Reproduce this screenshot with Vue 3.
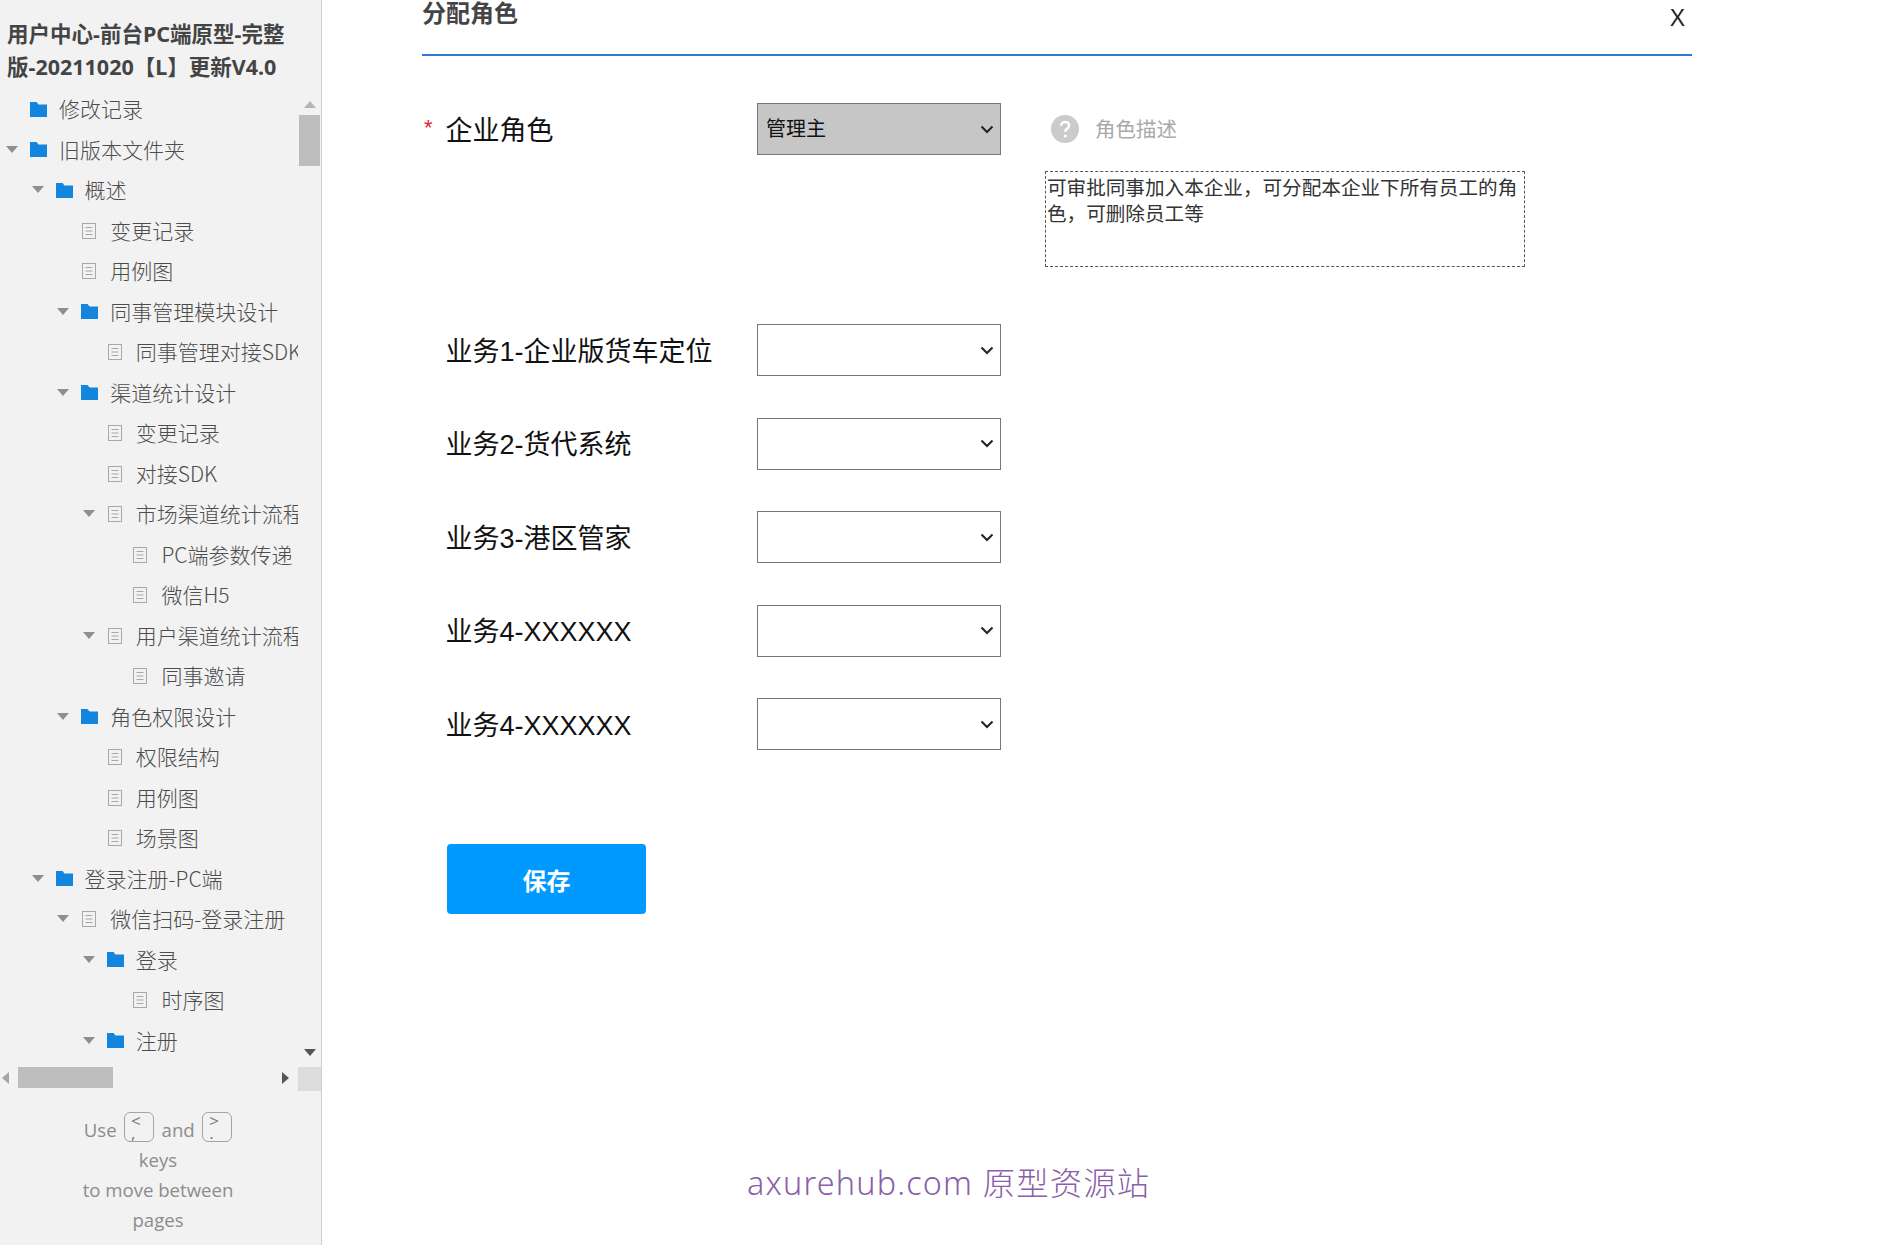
<template>
  <div class="page">
    <!-- left navigation -->
    <aside class="sidebar">
      <div class="project-title">用户中心-前台PC端原型-完整版-20211020【L】更新V4.0</div>

      <div class="tree-wrap">
        <ul class="tree">
          <li
            v-for="(row, i) in rows"
            :key="i"
            class="tree-row"
            :style="{ paddingLeft: 6 + row.level * 25.6 + 'px' }"
          >
            <span class="arrow-slot"><i v-if="row.open" class="arrow"></i></span>
            <svg v-if="row.type === 'folder'" class="icon" width="17" height="15" viewBox="0 0 17 15">
              <path d="M0 0h6.500l2 2.500H17V15H0z" fill="#1485dc" />
            </svg>
            <svg v-else class="icon" width="17" height="16" viewBox="0 0 17 16">
              <rect x="1.5" y=".5" width="13" height="15" fill="none" stroke="#a8a8a8" />
              <path d="M4.5 4.5h7M4.5 8h7M4.5 11.500h7" stroke="#a8a8a8" fill="none" />
            </svg>
            <span class="tree-label">{{ row.label }}</span>
          </li>
        </ul>
        <div class="vscroll">
          <i class="tri tri-up"></i>
          <div class="vthumb"></div>
          <i class="tri tri-down"></i>
        </div>
      </div>

      <div class="hscroll">
        <i class="tri tri-left"></i>
        <div class="hthumb"></div>
        <i class="tri tri-right"></i>
        <div class="corner"></div>
      </div>

      <div class="hint">
        <div class="hint-keys">
          <span>Use</span>
          <span class="key">{{ prevKey }}</span>
          <span>and</span>
          <span class="key">{{ nextKey }}</span>
        </div>
        <div>keys</div>
        <div>to move between</div>
        <div>pages</div>
      </div>
    </aside>

    <!-- role dialog -->
    <main class="main">
      <header class="dialog-head">
        <h1>分配角色</h1>
        <span class="close">X</span>
      </header>

      <form class="form" @submit.prevent>
        <div class="form-row role-row">
          <label class="label"><em>*</em>企业角色</label>
          <select class="select select-role">
            <option>管理主</option>
          </select>
          <div class="desc">
            <div class="desc-head">
              <svg width="28" height="28" viewBox="0 0 28 28">
                <circle cx="14" cy="14" r="14" fill="#cbcbcb" />
                <path d="M10 11c0-2.600 1.800-4 4.100-4 2.300 0 4 1.400 4 3.500 0 3-3.800 3-3.800 6.200" fill="none" stroke="#fff" stroke-width="2.400" />
                <circle cx="14.300" cy="21" r="1.600" fill="#fff" />
              </svg>
              <span>角色描述</span>
            </div>
            <div class="desc-box">可审批同事加入本企业，可分配本企业下所有员工的角色，可删除员工等</div>
          </div>
        </div>

        <div v-for="item in services" :key="item.id" class="form-row">
          <label class="label"><em></em>{{ item.name }}</label>
          <select class="select">
            <option></option>
          </select>
        </div>

        <button type="button" class="save">保存</button>
      </form>
    </main>

    <div class="watermark">axurehub.com 原型资源站</div>
  </div>
</template>

<script setup>
const prevKey = '<\n,'
const nextKey = '>\n.'

const rows = [
  { level: 0, type: 'folder', open: false, label: '修改记录' },
  { level: 0, type: 'folder', open: true, label: '旧版本文件夹' },
  { level: 1, type: 'folder', open: true, label: '概述' },
  { level: 2, type: 'file', open: false, label: '变更记录' },
  { level: 2, type: 'file', open: false, label: '用例图' },
  { level: 2, type: 'folder', open: true, label: '同事管理模块设计' },
  { level: 3, type: 'file', open: false, label: '同事管理对接SDK' },
  { level: 2, type: 'folder', open: true, label: '渠道统计设计' },
  { level: 3, type: 'file', open: false, label: '变更记录' },
  { level: 3, type: 'file', open: false, label: '对接SDK' },
  { level: 3, type: 'file', open: true, label: '市场渠道统计流程' },
  { level: 4, type: 'file', open: false, label: 'PC端参数传递' },
  { level: 4, type: 'file', open: false, label: '微信H5' },
  { level: 3, type: 'file', open: true, label: '用户渠道统计流程' },
  { level: 4, type: 'file', open: false, label: '同事邀请' },
  { level: 2, type: 'folder', open: true, label: '角色权限设计' },
  { level: 3, type: 'file', open: false, label: '权限结构' },
  { level: 3, type: 'file', open: false, label: '用例图' },
  { level: 3, type: 'file', open: false, label: '场景图' },
  { level: 1, type: 'folder', open: true, label: '登录注册-PC端' },
  { level: 2, type: 'file', open: true, label: '微信扫码-登录注册' },
  { level: 3, type: 'folder', open: true, label: '登录' },
  { level: 4, type: 'file', open: false, label: '时序图' },
  { level: 3, type: 'folder', open: true, label: '注册' },
]

const services = [
  { id: 1, name: '业务1-企业版货车定位' },
  { id: 2, name: '业务2-货代系统' },
  { id: 3, name: '业务3-港区管家' },
  { id: 4, name: '业务4-XXXXXX' },
  { id: 5, name: '业务4-XXXXXX' },
]
</script>

<style scoped>
.page {
  position: relative;
  display: flex;
  height: 1245px;
  overflow: hidden;
  background: #fff;
  font-family: "Liberation Sans", "Noto Sans CJK SC", sans-serif;
}

.sidebar {
  flex: none;
  width: 321px;
  background: #f2f2f2;
  border-right: 1px solid #cfcfcf;
}

.project-title {
  padding: 17px 0 0 7px;
  width: 285px;
  height: 88px;
  box-sizing: border-box;
  font-size: 21.500px;
  font-weight: 700;
  line-height: 33px;
  color: #444;
  font-family: "Noto Sans", "Noto Sans CJK SC", sans-serif;
}

.tree-wrap {
  display: flex;
  height: 974px;
}

.tree {
  flex: none;
  width: 298px;
  margin: 0;
  padding: 0;
  overflow: hidden;
  list-style: none;
}

.tree-row {
  display: flex;
  align-items: center;
  height: 40.500px;
  white-space: nowrap;
}

.arrow-slot {
  flex: none;
  width: 24px;
  margin-top: 1px;
}

.arrow {
  display: block;
  width: 0;
  height: 0;
  border-left: 6px solid transparent;
  border-right: 6px solid transparent;
  border-top: 7px solid #8f8f8f;
}

.icon {
  flex: none;
  margin-top: 2px;
}

.tree-label {
  margin-left: 12px;
  font-size: 21px;
  font-weight: 300;
  color: #4d4d4d;
  font-family: "Noto Sans CJK SC", sans-serif;
}

.vscroll {
  position: relative;
  flex: none;
  width: 22px;
  margin-top: 7px;
}

.vthumb {
  position: absolute;
  top: 20px;
  left: 1px;
  width: 21px;
  height: 51px;
  background: #bdbdbd;
}

.tri {
  position: absolute;
  width: 0;
  height: 0;
}

.tri-up {
  top: 6px;
  left: 6px;
  border-left: 6px solid transparent;
  border-right: 6px solid transparent;
  border-bottom: 7px solid #b5b5b5;
}

.tri-down {
  bottom: 6px;
  left: 6px;
  border-left: 6px solid transparent;
  border-right: 6px solid transparent;
  border-top: 7px solid #555;
}

.hscroll {
  position: relative;
  height: 21px;
  margin-top: 5px;
}

.hthumb {
  position: absolute;
  left: 18px;
  width: 95px;
  height: 21px;
  background: #bdbdbd;
}

.tri-left {
  top: 5px;
  left: 2px;
  border-top: 6px solid transparent;
  border-bottom: 6px solid transparent;
  border-right: 7px solid #a5a5a5;
}

.tri-right {
  top: 5px;
  left: 282px;
  border-top: 6px solid transparent;
  border-bottom: 6px solid transparent;
  border-left: 7px solid #555;
}

.corner {
  position: absolute;
  left: 298px;
  width: 23px;
  height: 24px;
  background: #dcdcdc;
}

.hint {
  width: 172px;
  margin: 27px 0 0 72px;
  font-family: "Open Sans", sans-serif;
  font-size: 18.600px;
  line-height: 30px;
  text-align: center;
  color: #8c8c8c;
}

.hint-keys {
  display: flex;
  justify-content: center;
  align-items: center;
  gap: 7.500px;
  height: 30px;
}

.key {
  flex: none;
  box-sizing: border-box;
  width: 30px;
  height: 30px;
  margin-top: -6px;
  padding: 2px 0 0 6px;
  border: 1.500px solid #a5a5a5;
  border-radius: 6px;
  font-size: 17px;
  line-height: 12px;
  text-align: left;
  white-space: pre-line;
  color: #777;
}

.main {
  flex: none;
  width: 1270px;
  margin-left: 100px;
}

.dialog-head {
  display: flex;
  justify-content: space-between;
  height: 54px;
  border-bottom: 2px solid #2d78d8;
}

.dialog-head h1 {
  margin: 0;
  font-size: 24px;
  font-weight: 700;
  line-height: 28px;
  color: #444;
}

.close {
  padding: 5px 7px 0 0;
  font-size: 23px;
  line-height: 26px;
  color: #222;
}

.form {
  display: flex;
  flex-direction: column;
  align-items: flex-start;
  gap: 41.500px;
  padding-top: 47px;
}

.form-row {
  display: flex;
  align-items: flex-start;
}

.role-row {
  margin-bottom: 15.500px;
}

.label {
  display: flex;
  align-items: center;
  width: 335px;
  height: 50px;
  font-size: 27px;
  color: #111;
}

.label em {
  flex: none;
  width: 23.500px;
  padding-left: 2px;
  box-sizing: border-box;
  font-size: 22px;
  font-style: normal;
  color: #d9262c;
}

.select {
  flex: none;
  box-sizing: border-box;
  width: 244px;
  height: 52px;
  padding: 0 8px;
  appearance: none;
  background: #fff url("data:image/svg+xml,%3Csvg xmlns='http://www.w3.org/2000/svg' width='14' height='9' viewBox='0 0 14 9'%3E%3Cpath d='M1.500 1.500L7 7l5.500-5.500' fill='none' stroke='%23222' stroke-width='2'/%3E%3C/svg%3E") no-repeat right 6px center;
  border: 1px solid #777;
  border-radius: 0;
  font-family: "Liberation Sans", "Noto Sans CJK SC", sans-serif;
  font-size: 20px;
  color: #111;
}

.select-role {
  background-color: #c6c6c6;
}

.desc {
  margin-left: 44px;
}

.desc-head {
  display: flex;
  align-items: center;
  gap: 16px;
  height: 52px;
  padding-left: 6px;
  font-size: 20.500px;
  color: #a9a9a9;
}

.desc-head span {
  margin-top: -2px;
}

.desc-box {
  box-sizing: border-box;
  width: 480px;
  height: 96px;
  margin-top: 16px;
  padding: 3px 6px 0 1px;
  border: 1px dashed #555;
  font-size: 19.600px;
  line-height: 26px;
  color: #333;
}

.save {
  width: 199px;
  height: 70px;
  margin: 52.500px 0 0 25px;
  padding: 0;
  background: #0099ff;
  border: 0;
  border-radius: 4px;
  font-family: "Noto Sans CJK SC", sans-serif;
  font-size: 24px;
  font-weight: 700;
  color: #fff;
}

.watermark {
  position: absolute;
  left: 747px;
  top: 1159px;
  font-family: "Noto Sans", "Noto Sans CJK SC", sans-serif;
  font-size: 32.300px;
  font-weight: 300;
  letter-spacing: 1.200px;
  line-height: 46px;
  white-space: nowrap;
  color: #8a5fa8;
}
</style>
